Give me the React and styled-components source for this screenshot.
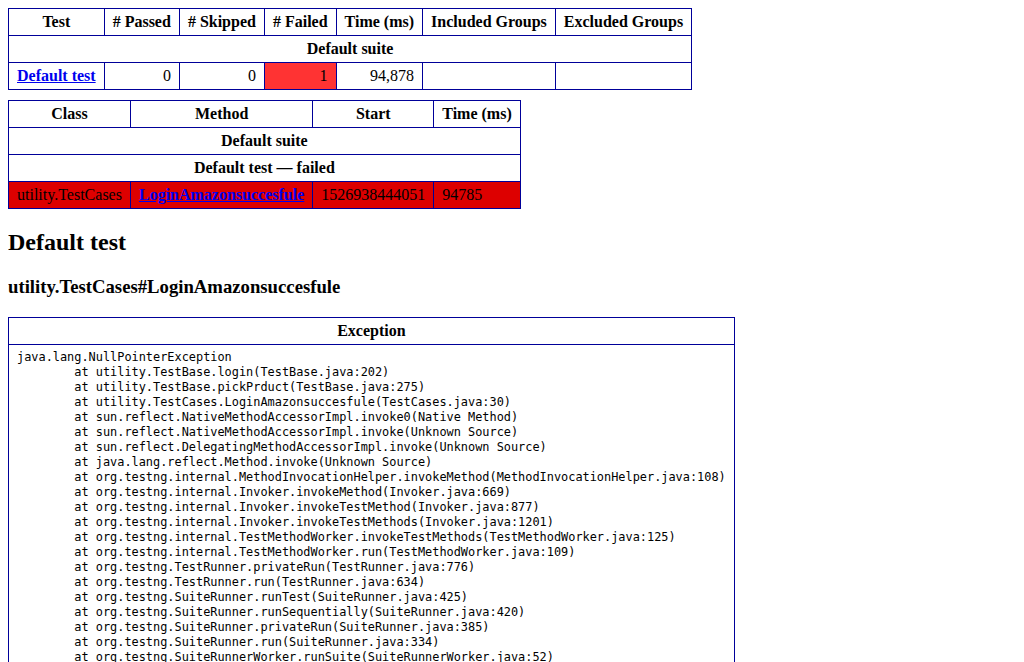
import React from 'react';
import styled, { createGlobalStyle } from 'styled-components';

const GlobalStyle = createGlobalStyle`
  html {
    overflow-y: scroll;
  }

  ::-webkit-scrollbar {
    width: 17px;
    background: #f0f0f0;
  }

  ::-webkit-scrollbar-thumb {
    background: #c0c0c0;
    border: 2px solid #f0f0f0;
    border-top: 0;
    border-bottom: 0;
  }

  ::-webkit-scrollbar-button:single-button {
    height: 17px;
    background: #f0f0f0;
  }

  body {
    margin: 8px;
    background: #fff;
    color: #000;
    font-family: 'Liberation Serif', 'Times New Roman', serif;
    font-size: 16px;
  }
`;

const Table = styled.table`
  margin-bottom: 10px;
  border-collapse: collapse;
  empty-cells: show;
`;

const Th = styled.th`
  border: 1px solid #009;
  padding: 0.25em 0.5em;
  vertical-align: bottom;
  font-weight: bold;
  text-align: center;
`;

const Td = styled.td`
  border: 1px solid #009;
  padding: 0.25em 0.5em;
  vertical-align: top;
  text-align: ${props => (props.$num ? 'right' : 'left')};
  background-color: ${props =>
    props.$attn ? '#f33' : props.$failed ? '#d00' : 'transparent'};
`;

const Link = styled.a`
  font-weight: bold;
  color: #00e;
  text-decoration: underline;
  cursor: pointer;
`;

const Heading2 = styled.h2`
  font-size: 1.5em;
  margin: 0.83em 0;
`;

const Heading3 = styled.h3`
  font-size: 1.17em;
  margin: 1em 0;
`;

const StackTrace = styled.div`
  white-space: pre;
  tab-size: 8;
  padding-top: 1px;
  font-family: 'DejaVu Sans Mono', monospace;
  font-size: 11.9px;
  line-height: 15px;
`;

const summaryHeaders = [
  'Test',
  '# Passed',
  '# Skipped',
  '# Failed',
  'Time (ms)',
  'Included Groups',
  'Excluded Groups',
];

const trace = [
  'java.lang.NullPointerException',
  '\tat utility.TestBase.login(TestBase.java:202)',
  '\tat utility.TestBase.pickPrduct(TestBase.java:275)',
  '\tat utility.TestCases.LoginAmazonsuccesfule(TestCases.java:30)',
  '\tat sun.reflect.NativeMethodAccessorImpl.invoke0(Native Method)',
  '\tat sun.reflect.NativeMethodAccessorImpl.invoke(Unknown Source)',
  '\tat sun.reflect.DelegatingMethodAccessorImpl.invoke(Unknown Source)',
  '\tat java.lang.reflect.Method.invoke(Unknown Source)',
  '\tat org.testng.internal.MethodInvocationHelper.invokeMethod(MethodInvocationHelper.java:108)',
  '\tat org.testng.internal.Invoker.invokeMethod(Invoker.java:669)',
  '\tat org.testng.internal.Invoker.invokeTestMethod(Invoker.java:877)',
  '\tat org.testng.internal.Invoker.invokeTestMethods(Invoker.java:1201)',
  '\tat org.testng.internal.TestMethodWorker.invokeTestMethods(TestMethodWorker.java:125)',
  '\tat org.testng.internal.TestMethodWorker.run(TestMethodWorker.java:109)',
  '\tat org.testng.TestRunner.privateRun(TestRunner.java:776)',
  '\tat org.testng.TestRunner.run(TestRunner.java:634)',
  '\tat org.testng.SuiteRunner.runTest(SuiteRunner.java:425)',
  '\tat org.testng.SuiteRunner.runSequentially(SuiteRunner.java:420)',
  '\tat org.testng.SuiteRunner.privateRun(SuiteRunner.java:385)',
  '\tat org.testng.SuiteRunner.run(SuiteRunner.java:334)',
  '\tat org.testng.SuiteRunnerWorker.runSuite(SuiteRunnerWorker.java:52)',
  '\tat org.testng.SuiteRunnerWorker.run(SuiteRunnerWorker.java:86)',
  '\tat org.testng.TestNG.runSuitesSequentially(TestNG.java:1318)',
  '\tat org.testng.TestNG.runSuitesLocally(TestNG.java:1243)',
  '\tat org.testng.TestNG.runSuites(TestNG.java:1161)',
  '\tat org.testng.TestNG.run(TestNG.java:1129)',
  '\tat org.testng.remote.AbstractRemoteTestNG.run(AbstractRemoteTestNG.java:114)',
  '\tat org.testng.remote.RemoteTestNG.initAndRun(RemoteTestNG.java:251)',
  '\tat org.testng.remote.RemoteTestNG.main(RemoteTestNG.java:77)',
].join('\n');

export default function App() {
  return (
    <>
      <GlobalStyle />
      <Table>
        <thead>
          <tr>
            {summaryHeaders.map(h => (
              <Th key={h}>{h}</Th>
            ))}
          </tr>
        </thead>
        <tbody>
          <tr>
            <Th colSpan={7}>Default suite</Th>
          </tr>
          <tr>
            <Td>
              <Link>Default test</Link>
            </Td>
            <Td $num>0</Td>
            <Td $num>0</Td>
            <Td $num $attn>1</Td>
            <Td $num>94,878</Td>
            <Td></Td>
            <Td></Td>
          </tr>
        </tbody>
      </Table>

      <Table>
        <thead>
          <tr>
            <Th>Class</Th>
            <Th>Method</Th>
            <Th>Start</Th>
            <Th>Time (ms)</Th>
          </tr>
        </thead>
        <tbody>
          <tr>
            <Th colSpan={4}>Default suite</Th>
          </tr>
          <tr>
            <Th colSpan={4}>Default test — failed</Th>
          </tr>
          <tr>
            <Td $failed>utility.TestCases</Td>
            <Td $failed>
              <Link>LoginAmazonsuccesfule</Link>
            </Td>
            <Td $failed>1526938444051</Td>
            <Td $failed>94785</Td>
          </tr>
        </tbody>
      </Table>

      <Heading2>Default test</Heading2>
      <Heading3>utility.TestCases#LoginAmazonsuccesfule</Heading3>

      <Table>
        <tbody>
          <tr>
            <Th>Exception</Th>
          </tr>
          <tr>
            <Td>
              <StackTrace>{trace}</StackTrace>
            </Td>
          </tr>
        </tbody>
      </Table>
    </>
  );
}
